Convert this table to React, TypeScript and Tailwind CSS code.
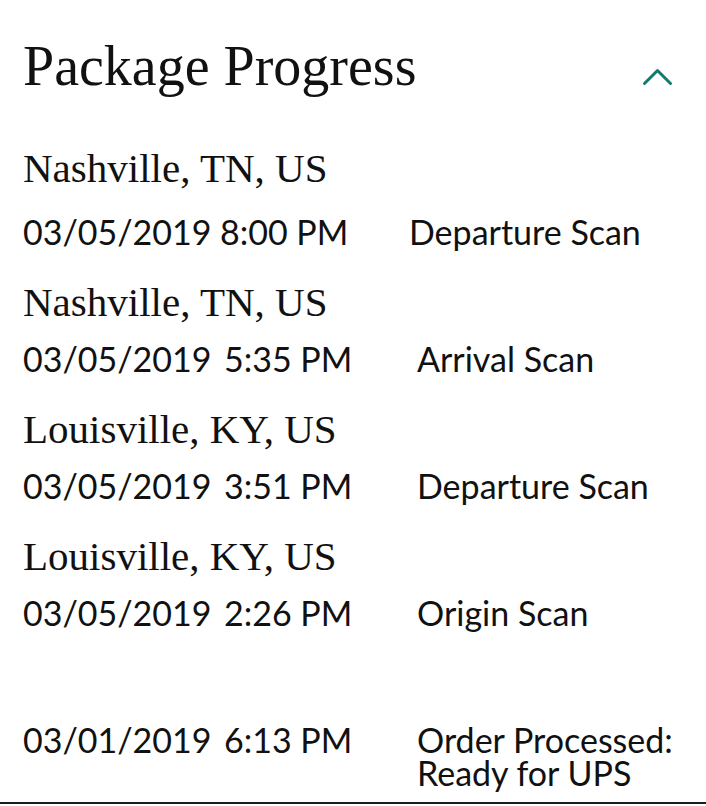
type Scan = {
  city: string;
  date: string;
  time: string;
  status: string[];
};

const scans: Scan[] = [
  { city: "Nashville, TN, US", date: "03/05/2019", time: "8:00 PM", status: ["Departure Scan"] },
  { city: "Nashville, TN, US", date: "03/05/2019", time: "5:35 PM", status: ["Arrival Scan"] },
  { city: "Louisville, KY, US", date: "03/05/2019", time: "3:51 PM", status: ["Departure Scan"] },
  { city: "Louisville, KY, US", date: "03/05/2019", time: "2:26 PM", status: ["Origin Scan"] },
  { city: "", date: "03/01/2019", time: "6:13 PM", status: ["Order Processed:", "Ready for UPS"] },
];

const serif = "font-['Liberation_Serif',serif]";
const sans = "font-['Lato','Segoe_UI',sans-serif]";

function ScanRow({ scan, first }: { scan: Scan; first: boolean }) {
  return (
    <div className={first ? "mt-[46px]" : "mt-[30px]"}>
      <div className={`${serif} h-[48px] text-[41px] leading-[48px] text-[#111]`}>
        {scan.city}
      </div>
      <div
        className={`${sans} grid text-[34px] leading-[33px] text-[#111] ${
          first ? "mt-[23px] grid-cols-[386px_1fr]" : "mt-[16px] grid-cols-[394px_1fr]"
        }`}
      >
        <div className="flex">
          <span className="w-[197px] shrink-0">{scan.date}</span>
          <span className={first ? "" : "ml-[4px]"}>{scan.time}</span>
        </div>
        <div>
          {scan.status.map((s) => (
            <div key={s}>{s}</div>
          ))}
        </div>
      </div>
    </div>
  );
}

export default function App() {
  return (
    <div className="h-[806px] w-[706px] overflow-hidden bg-white">
      <div className="h-[804px] border-b-2 border-[#1c1c1c] pl-[23px] pr-[33px]">
        <div className="flex items-center justify-between pt-[34px]">
          <h1 className={`${serif} text-[56px] leading-[64px] text-[#111]`}>Package Progress</h1>
          {/* collapse toggle */}
          <svg className="mt-[20px]" width="31" height="19" viewBox="0 0 31 19" fill="none">
            <polyline
              points="2.5,16.5 15.5,3.5 28.5,16.5"
              stroke="#137a6e"
              strokeWidth="3"
              strokeLinecap="round"
              strokeLinejoin="round"
            />
          </svg>
        </div>
        {scans.map((scan, i) => (
          <ScanRow key={i} scan={scan} first={i === 0} />
        ))}
      </div>
    </div>
  );
}
